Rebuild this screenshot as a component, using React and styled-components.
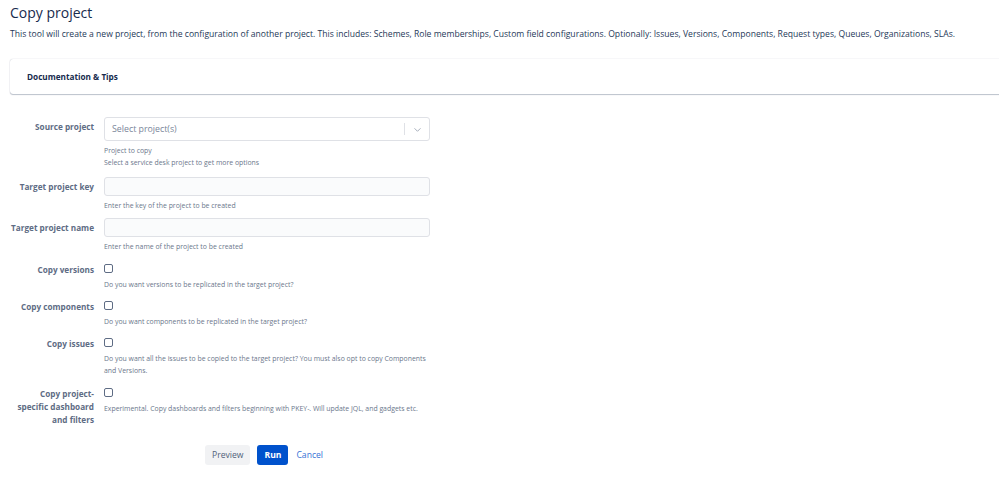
import React from 'react';
import styled, {createGlobalStyle} from 'styled-components';

const GlobalStyle = createGlobalStyle`
  body {
    margin: 0;
    background: #fff;
    font-family: "Open Sans", "Liberation Sans", sans-serif;
    color: #172b4d;
    overflow: hidden;
  }
`
const Page = styled.div`
  padding: 4px 0 0 10px;
`
const Title = styled.h1`
  margin: 0;
  font-size: 14px;
  font-weight: 500;
  line-height: 18px;
  color: #172b4d;
`
const Intro = styled.p`
  margin: 6px 0 0 0;
  font-size: 8.6px;
  line-height: 12px;
  color: #253858;
  white-space: nowrap;
`
const Card = styled.div`
  margin-top: 19px;
  margin-right: -10px;
  height: 35px;
  display: flex;
  align-items: center;
  padding-left: 17px;
  border-radius: 3px;
  background: #fff;
  box-shadow: 0 1px 1px rgba(9, 30, 66, 0.25), 0 0 1px rgba(9, 30, 66, 0.31);
`
const CardTitle = styled.h3`
  margin: 0;
  font-size: 8.2px;
  font-weight: 700;
  color: #172b4d;
`
const Form = styled.div`
  margin: 23px 0 0 -10px;
  display: flex;
  flex-direction: column;
`
const Row = styled.div`
  display: grid;
  grid-template-columns: 94px 326px;
  column-gap: 10px;
  margin-top: ${props => props.$gap || 0}px;
`
const Label = styled.label`
  justify-self: end;
  width: 84px;
  text-align: right;
  font-size: 8.2px;
  font-weight: 700;
  line-height: 13px;
  color: #5e6c84;
  padding-top: ${props => props.$pad || 0}px;
`
const Field = styled.div`
  display: flex;
  flex-direction: column;
`
const Select = styled.div`
  height: 24px;
  box-sizing: border-box;
  border: 1px solid #dfe1e6;
  border-radius: 3px;
  background: #fff;
  display: flex;
  align-items: center;
  padding-left: 7px;
  font-size: 8.8px;
  color: #7a869a;
`
const SelectText = styled.span`
  flex: 1;
`
const Divider = styled.span`
  width: 1px;
  height: 12px;
  background: #dfe1e6;
`
const Chevron = styled.span`
  width: 24px;
  display: flex;
  justify-content: center;
  color: #a5adba;
`
const Input = styled.div`
  height: 19px;
  box-sizing: border-box;
  border: 1px solid #dfe1e6;
  border-radius: 3px;
  background: #fafbfc;
`
const Hint = styled.div`
  font-size: 6.9px;
  line-height: 12px;
  color: #6b778c;
  margin-top: ${props => props.$gap || 0}px;
`
const CheckBox = styled.div`
  height: 13px;
`
const Check = styled.span`
  display: block;
  width: 9px;
  height: 9px;
  margin-top: 1px;
  box-sizing: border-box;
  border: 1px solid #5e6c84;
  border-radius: 2px;
  background: #fff;
`
const Actions = styled.div`
  display: flex;
  align-items: center;
  gap: 7px;
  margin: 19px 0 0 195px;
`
const Button = styled.button`
  height: 20px;
  border: none;
  border-radius: 3px;
  padding: 0 7px;
  font-family: inherit;
  font-size: 8.6px;
  font-weight: ${props => props.$primary ? 700 : 400};
  background: ${props => props.$primary ? '#0052cc' : '#f1f2f4'};
  color: ${props => props.$primary ? '#fff' : '#505f79'};
`
const LinkButton = styled.span`
  font-size: 8.6px;
  color: #3572d6;
  margin-left: 1px;
  cursor: pointer;
`

function ChevronIcon() {
  return (
    <svg width="9" height="9" viewBox="0 0 10 10">
      <path d="M2 4l3 3 3-3" fill="none" stroke="currentColor" strokeWidth="1.1" strokeLinecap="round" strokeLinejoin="round"/>
    </svg>
  )
}

function CheckRow({label, hints, gap}) {
  return (
    <Row $gap={gap}>
      <Label>{label}</Label>
      <Field>
        <CheckBox><Check/></CheckBox>
        {hints.map((h, i) => <Hint key={i} $gap={i === 0 ? 3 : 0}>{h}</Hint>)}
      </Field>
    </Row>
  )
}

export default function App() {
  return (
    <Page>
      <GlobalStyle/>
      <Title>Copy project</Title>
      <Intro>This tool will create a new project, from the configuration of another project. This includes: Schemes, Role memberships, Custom field configurations. Optionally: Issues, Versions, Components, Request types, Queues, Organizations, SLAs.</Intro>
      <Card>
        <CardTitle>Documentation &amp; Tips</CardTitle>
      </Card>
      <Form>
        <Row>
          <Label $pad={3}>Source project</Label>
          <Field>
            <Select>
              <SelectText>Select project(s)</SelectText>
              <Divider/>
              <Chevron><ChevronIcon/></Chevron>
            </Select>
            <Hint $gap={4}>Project to copy</Hint>
            <Hint>Select a service desk project to get more options</Hint>
          </Field>
        </Row>
        <Row $gap={8}>
          <Label $pad={3}>Target project key</Label>
          <Field>
            <Input/>
            <Hint $gap={4}>Enter the key of the project to be created</Hint>
          </Field>
        </Row>
        <Row $gap={6}>
          <Label $pad={3}>Target project name</Label>
          <Field>
            <Input/>
            <Hint $gap={4}>Enter the name of the project to be created</Hint>
          </Field>
        </Row>
        <CheckRow gap={10} label="Copy versions" hints={['Do you want versions to be replicated in the target project?']}/>
        <CheckRow gap={9} label="Copy components" hints={['Do you want components to be replicated in the target project?']}/>
        <CheckRow gap={9} label="Copy issues" hints={['Do you want all the issues to be copied to the target project? You must also opt to copy Components', 'and Versions.']}/>
        <CheckRow gap={10} label="Copy project-specific dashboard and filters" hints={['Experimental. Copy dashboards and filters beginning with PKEY-. Will update JQL, and gadgets etc.']}/>
      </Form>
      <Actions>
        <Button>Preview</Button>
        <Button $primary>Run</Button>
        <LinkButton>Cancel</LinkButton>
      </Actions>
    </Page>
  )
}
